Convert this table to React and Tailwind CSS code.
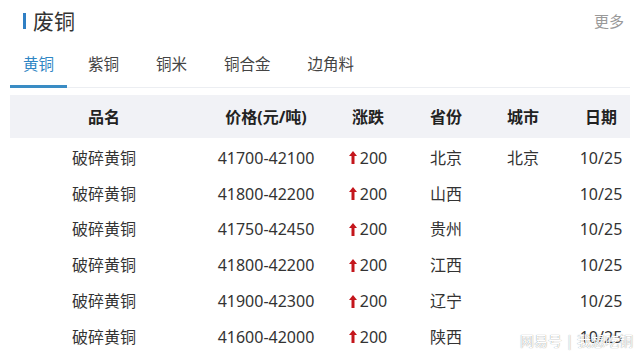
const TABS = ['黄铜', '紫铜', '铜米', '铜合金', '边角料'];

const ROWS = [
  { name: '破碎黄铜', price: '41700-42100', change: '200', province: '北京', city: '北京', date: '10/25' },
  { name: '破碎黄铜', price: '41800-42200', change: '200', province: '山西', city: '', date: '10/25' },
  { name: '破碎黄铜', price: '41750-42450', change: '200', province: '贵州', city: '', date: '10/25' },
  { name: '破碎黄铜', price: '41800-42200', change: '200', province: '江西', city: '', date: '10/25' },
  { name: '破碎黄铜', price: '41900-42300', change: '200', province: '辽宁', city: '', date: '10/25' },
  { name: '破碎黄铜', price: '41600-42000', change: '200', province: '陕西', city: '', date: '10/25' },
];

const COLS = 'grid grid-cols-[188px_136px_68px_88px_66px_74px]';

function UpArrow() {
  return (
    <svg width="8" height="13" viewBox="0 0 8 13" className="mr-[3px] shrink-0">
      <path d="M4 0 L8 5 L5.5 5 L5.5 13 L2.5 13 L2.5 5 L0 5 Z" fill="#c4161c" />
    </svg>
  );
}

export default function App() {
  return (
    <div
      className="relative w-[640px] h-[357px] overflow-hidden bg-white text-[#333]"
      style={{ fontFamily: '"Noto Sans", "Noto Sans CJK SC", sans-serif' }}
    >
      {/* header */}
      <div className="flex items-center h-[42px] pl-[23px] pr-[16px]">
        <span className="w-[3px] h-[16px] bg-[#2f7fc4] mr-[7px]" />
        <span className="text-[21px] leading-none text-[#333]">废铜</span>
        <span className="ml-auto text-[15px] text-[#999]">更多</span>
      </div>

      {/* tabs */}
      <div className="mx-[10px] w-[620px] border-b border-[#eceef2] flex h-[46px]">
        {TABS.map((t, i) => (
          <div
            key={t}
            className={
              i === 0
                ? 'px-[13px] flex items-center text-[15.5px] text-[#2f86c4] border-b-[3px] border-[#3a8cc4] -mb-px pt-[3px]'
                : i === 1
                ? 'ml-[21px] flex items-center text-[15.5px] text-[#444]'
                : 'ml-[37px] flex items-center text-[15.5px] text-[#444]'
            }
          >
            {t}
          </div>
        ))}
      </div>

      {/* table */}
      <div className="mx-[10px] w-[620px] mt-[7px]">
        <div className={`${COLS} h-[43px] bg-[#f1f2f6] items-center text-[16px] font-bold text-[#222]`}>
          <div className="text-center">品名</div>
          <div className="text-center">价格(元/吨)</div>
          <div className="text-center">涨跌</div>
          <div className="text-center">省份</div>
          <div className="text-center">城市</div>
          <div className="text-center pl-[16px]">日期</div>
        </div>
        <div className="pt-[2px]">
          {ROWS.map((r, i) => (
            <div key={i} className={`${COLS} h-[35.8px] items-center text-[16px] text-[#333]`}>
              <div className="text-center">{r.name}</div>
              <div className="text-center">{r.price}</div>
              <div className="flex items-center justify-center">
                <UpArrow />
                <span>{r.change}</span>
              </div>
              <div className="text-center">{r.province}</div>
              <div className="text-center">{r.city}</div>
              <div className="text-center pl-[16px]">{r.date}</div>
            </div>
          ))}
        </div>
      </div>

      {/* watermark */}
      <div className="absolute left-[520px] top-[330px] text-[14px] text-white [text-shadow:0_0_1px_#777] whitespace-nowrap">
        网易号 | 我想吃铜
      </div>
    </div>
  );
}
